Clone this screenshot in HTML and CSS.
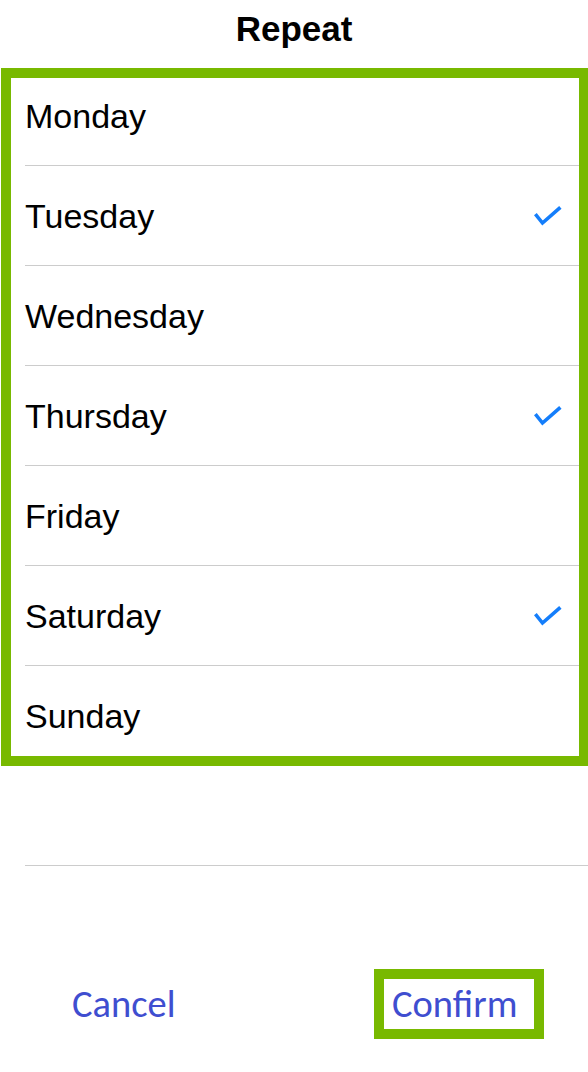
FILE: index.html
```html
<!DOCTYPE html>
<html lang="en">
<head>
<meta charset="utf-8">
<title>Repeat</title>
<link rel="stylesheet" href="styles.css">
</head>
<body>
<div class="sheet">
  <header class="title-bar">
    <h1 class="title">Repeat</h1>
  </header>

  <ul class="day-list">
    <li class="day-row"><span class="day-name">Monday</span></li>
    <li class="day-row"><span class="day-name">Tuesday</span>
      <svg class="check" viewBox="0 0 28 22" width="28" height="22" aria-hidden="true"><path d="M2.5 10.5 L8.5 18 L25 3.5"/></svg></li>
    <li class="day-row"><span class="day-name">Wednesday</span></li>
    <li class="day-row"><span class="day-name">Thursday</span>
      <svg class="check" viewBox="0 0 28 22" width="28" height="22" aria-hidden="true"><path d="M2.5 10.5 L8.5 18 L25 3.5"/></svg></li>
    <li class="day-row"><span class="day-name">Friday</span></li>
    <li class="day-row"><span class="day-name">Saturday</span>
      <svg class="check" viewBox="0 0 28 22" width="28" height="22" aria-hidden="true"><path d="M2.5 10.5 L8.5 18 L25 3.5"/></svg></li>
    <li class="day-row"><span class="day-name">Sunday</span></li>
    <li class="day-row day-row--spacer"></li>
  </ul>

  <!-- highlight ring drawn over the day list -->
  <div class="focus-ring focus-ring--list"></div>

  <footer class="actions">
    <button class="action">Cancel</button>
    <button class="action action--focused">Confirm</button>
  </footer>
</div>
</body>
</html>
```

FILE: styles.css
```css
* {
  box-sizing: border-box;
}

html, body {
  margin: 0;
  padding: 0;
  background: #ffffff;
}

.sheet {
  position: relative;
  width: 588px;
  height: 1072px;
  font-family: "Liberation Sans", Arial, sans-serif;
  color: #000000;
  overflow: hidden;
}

.title-bar {
  height: 66px;
  display: flex;
  justify-content: center;
  padding-top: 9px;
}

.title {
  margin: 0;
  font-size: 35px;
  font-weight: bold;
  line-height: 40px;
}

.day-list {
  list-style: none;
  margin: 0;
  padding: 0 0 0 25px;
}

.day-row {
  height: 100px;
  display: flex;
  align-items: center;
  justify-content: space-between;
  padding-right: 26px;
  border-bottom: 1px solid #cccccc;
}

.day-name {
  font-size: 34px;
  line-height: 40px;
}

.check {
  display: block;
  fill: none;
  stroke: #147efb;
  stroke-width: 3.6;
  stroke-linecap: square;
  stroke-linejoin: miter;
}

.focus-ring {
  position: absolute;
  border: 10px solid #78b900;
  pointer-events: none;
}

.focus-ring--list {
  top: 68px;
  left: 1px;
  width: 588px;
  height: 698px;
}

.actions {
  display: flex;
  justify-content: space-between;
  margin-top: 103px;
  padding: 0 44px 0 54px;
}

.action {
  width: 170px;
  height: 70px;
  padding: 0 0 0 8px;
  border: 10px solid transparent;
  background: #ffffff;
  font-family: Carlito, "Open Sans", "Liberation Sans", sans-serif;
  font-size: 38.5px;
  line-height: 48px;
  text-align: left;
  color: #3f4ed0;
}

.action--focused {
  border-color: #78b900;
}
```
